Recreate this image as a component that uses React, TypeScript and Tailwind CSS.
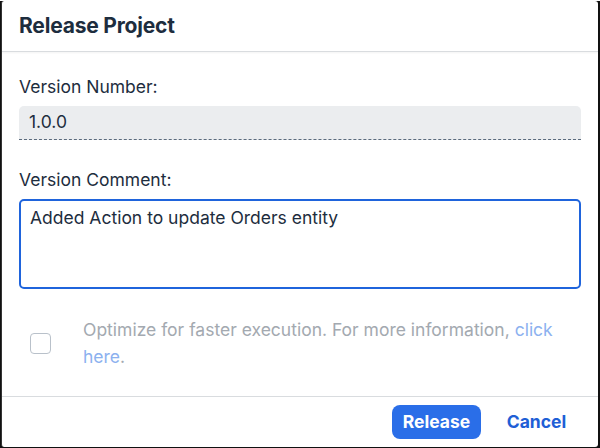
export default function App() {
  return (
    <div className="w-[600px] h-[448px] bg-[#111] p-0">
      <div
        className="w-[597px] h-[446px] ml-[1px] mt-[1px] bg-white rounded-[3px] border-l border-[#333] flex flex-col text-[#1d2d3e]"
        style={{ fontFamily: 'Inter, "Noto Sans", sans-serif' }}
      >
        <div className="h-[51px] flex items-center px-[17px] border-b border-[#d9dcdf] shadow-[0_1px_2px_rgba(0,0,0,0.05)]">
          <h1 className="text-[21px] font-bold tracking-[-0.2px]">Release Project</h1>
        </div>

        <div className="flex-1 flex flex-col px-[17px]">
          <label className="mt-[25px] text-[17.5px] leading-[20px]">Version Number:</label>
          <div className="mt-[9px] h-[34px] bg-[#ebedef] rounded-t-[5px] border-b border-dashed border-[#5b6b7d] flex items-center px-[10px] text-[17.5px]">
            1.0.0
          </div>

          <label className="mt-[30px] text-[17.5px] leading-[20px]">Version Comment:</label>
          <div className="mt-[9px] h-[90px] border-2 border-[#1f64dc] rounded-[5px] px-[9px] pt-[7px] text-[17.5px] leading-[20px]">
            Added Action to update Orders entity
          </div>

          <div className="mt-[27px] flex items-center">
            <div className="w-[21px] h-[21px] ml-[11px] border border-[#b9c1ca] rounded-[4px] shrink-0" />
            <div className="ml-[32px] text-[17.5px] leading-[27px] text-[#a3a9b0]">
              <div>
                Optimize for faster execution. For more information,{' '}
                <span className="text-[#8cb1ef]">click</span>
              </div>
              <div>
                <span className="text-[#8cb1ef]">here</span>.
              </div>
            </div>
          </div>
        </div>

        <div className="h-[51px] border-t border-[#d9dcdf] flex items-center justify-end pr-[17px] gap-[11px]">
          <button className="h-[34px] w-[89px] rounded-[8px] bg-[#2a6ee8] text-white text-[17.5px] font-bold">
            Release
          </button>
          <button className="h-[34px] w-[89px] rounded-[8px] text-[#1f5fd6] text-[17.5px] font-bold">
            Cancel
          </button>
        </div>
      </div>
    </div>
  )
}
